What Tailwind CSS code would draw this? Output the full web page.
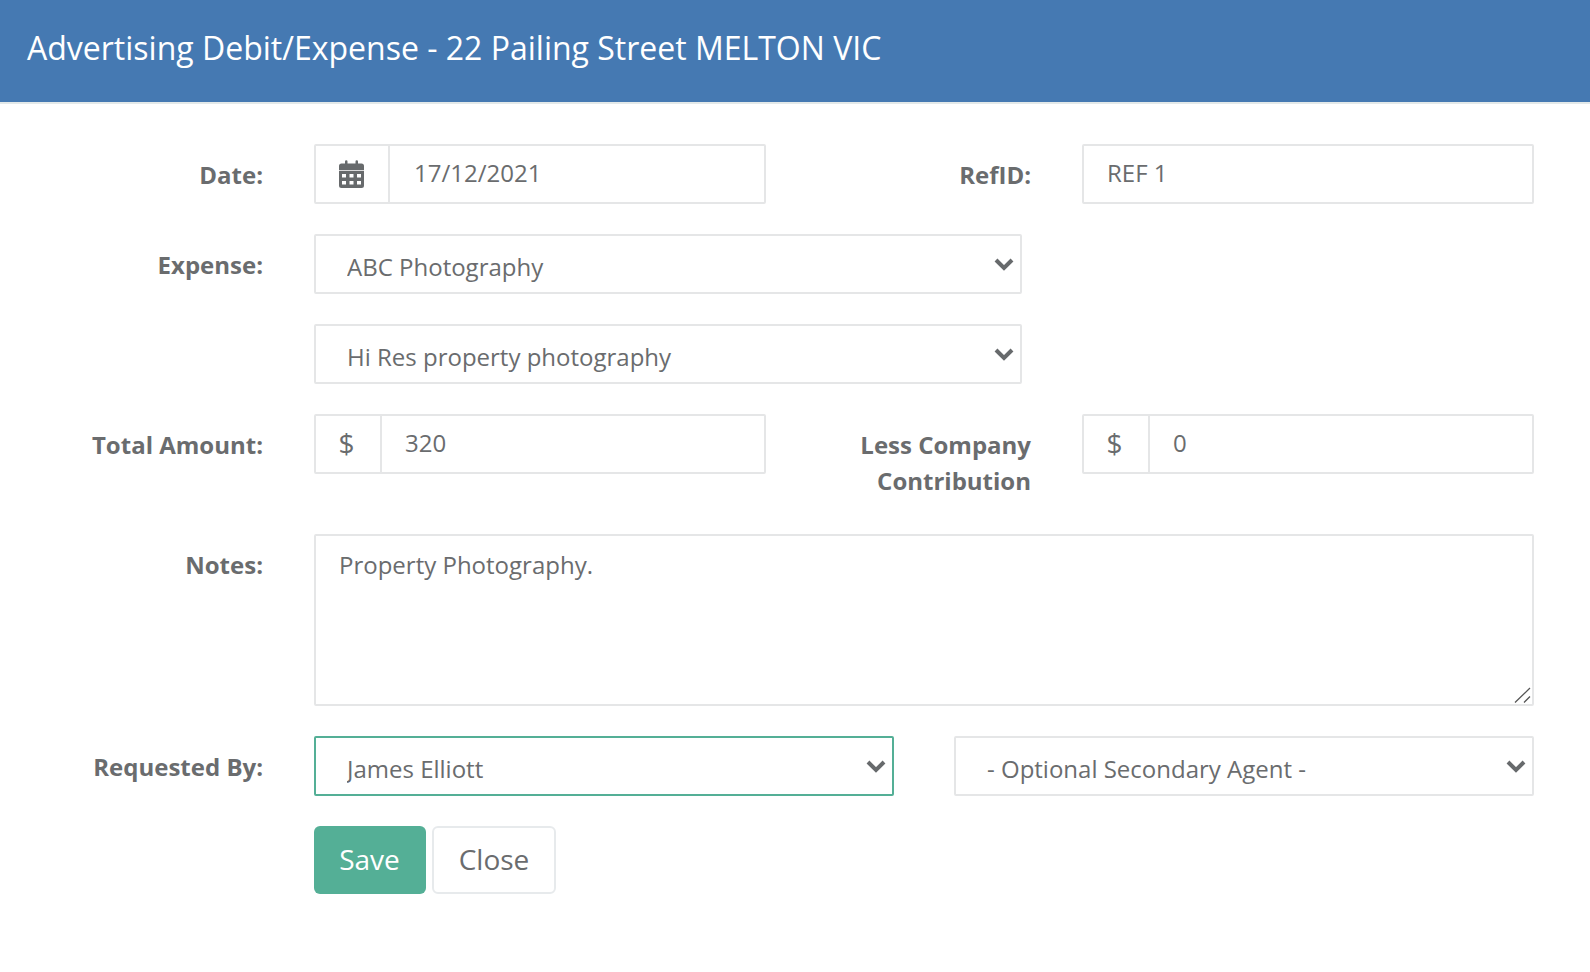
<!DOCTYPE html>
<html lang="en">
<head>
  <meta charset="UTF-8" />
  <meta name="viewport" content="width=device-width, initial-scale=1.0"/>
  <title>Advertising Debit/Expense</title>
  <script src="https://cdn.jsdelivr.net/npm/@tailwindcss/browser@4"></script>
</head>
<body class="bg-white text-[#6a6c6e] font-['Open_Sans',sans-serif] text-[24px]">

  <!-- Header -->
  <div class="h-[104px] bg-[#4579b2] border-b-2 border-[#e3e9e9] pl-[27px] pt-[26px]">
    <h1 class="text-[32px] leading-[44px] text-white">Advertising Debit/Expense - 22 Pailing Street MELTON VIC</h1>
  </div>

  <form class="pt-[40px] pr-[56px]">

    <!-- Date / RefID -->
    <div class="flex h-[60px] mb-[30px]">
      <label class="w-[263px] mr-[51px] pt-[13px] text-right font-bold leading-[36px]">Date:</label>
      <div class="flex w-[452px] h-[60px] border-2 border-[#e5e6e7] rounded-[2px]">
        <span class="w-[74px] flex items-center justify-center border-r-2 border-[#e5e6e7] pr-[2px]">
          <svg class="w-[25px] h-[28px]" viewBox="0 0 25 28" fill="#676a6c">
            <path d="M6 1.500a1.250 1.250 0 0 1 2.500 0V4H6zM16.500 1.500a1.250 1.250 0 0 1 2.500 0V4h-2.500z"/>
            <path d="M2.500 3.500h20A2.500 2.500 0 0 1 25 6v4.300H0V6A2.500 2.500 0 0 1 2.500 3.500z"/>
            <path fill-rule="evenodd" d="M0 11h25V25.500A2.500 2.500 0 0 1 22.500 28h-20A2.500 2.500 0 0 1 0 25.500zM3 14v3.500h4V14zM10.500 14v3.500h4V14zM18 14v3.500h4V14zM3 21v3.500h4V21zM10.500 21v3.500h4V21zM18 21v3.500h4V21z"/>
          </svg>
        </span>
        <input value="17/12/2021" class="flex-1 min-w-0 pl-[24px] pb-[2px] outline-none" />
      </div>
      <label class="w-[265px] mr-[51px] pt-[13px] text-right font-bold leading-[36px]">RefID:</label>
      <input value="REF 1" class="w-[452px] h-[60px] border-2 border-[#e5e6e7] rounded-[2px] pl-[23px] pb-[4px] outline-none" />
    </div>

    <!-- Expense -->
    <div class="flex h-[60px] mb-[30px]">
      <label class="w-[263px] mr-[51px] pt-[13px] text-right font-bold leading-[36px]">Expense:</label>
      <div class="relative w-[708px] h-[60px]">
        <select class="appearance-none w-full h-full border-2 border-[#e5e6e7] rounded-[2px] pl-[31px] pt-[6px] outline-none bg-white">
          <option>ABC Photography</option>
        </select>
        <svg class="absolute right-[8px] top-[23px] w-[20px] h-[14px]" viewBox="0 0 20 14" fill="none" stroke="#676a6c" stroke-width="4"><path d="M2 3l8 8 8-8"/></svg>
      </div>
    </div>

    <div class="flex h-[60px] mb-[30px]">
      <div class="w-[263px] mr-[51px]"></div>
      <div class="relative w-[708px] h-[60px]">
        <select class="appearance-none w-full h-full border-2 border-[#e5e6e7] rounded-[2px] pl-[31px] pt-[6px] outline-none bg-white">
          <option>Hi Res property photography</option>
        </select>
        <svg class="absolute right-[8px] top-[23px] w-[20px] h-[14px]" viewBox="0 0 20 14" fill="none" stroke="#676a6c" stroke-width="4"><path d="M2 3l8 8 8-8"/></svg>
      </div>
    </div>

    <!-- Amounts -->
    <div class="flex h-[90px] mb-[30px]">
      <label class="w-[263px] mr-[51px] pt-[13px] text-right font-bold leading-[36px]">Total Amount:</label>
      <div class="flex w-[452px] h-[60px] border-2 border-[#e5e6e7] rounded-[2px]">
        <span class="w-[66px] flex items-center justify-center border-r-2 border-[#e5e6e7] pb-[2px] pr-[3px] text-[28px]">$</span>
        <input value="320" class="flex-1 min-w-0 pl-[23px] pb-[2px] outline-none" />
      </div>
      <label class="w-[265px] mr-[51px] pt-[13px] text-right font-bold leading-[36px]">Less Company Contribution</label>
      <div class="flex w-[452px] h-[60px] border-2 border-[#e5e6e7] rounded-[2px]">
        <span class="w-[66px] flex items-center justify-center border-r-2 border-[#e5e6e7] pb-[2px] pr-[3px] text-[28px]">$</span>
        <input value="0" class="flex-1 min-w-0 pl-[23px] pb-[2px] outline-none" />
      </div>
    </div>

    <!-- Notes -->
    <div class="flex h-[172px] mb-[30px]">
      <label class="w-[263px] mr-[51px] pt-[13px] text-right font-bold leading-[36px]">Notes:</label>
      <div class="relative w-[1220px] h-[172px]">
        <textarea class="block resize-none w-full h-full border-2 border-[#e5e6e7] rounded-[2px] pl-[23px] pt-[11px] leading-[36px] outline-none">Property Photography.</textarea>
        <!-- resize grip -->
        <svg class="absolute right-[3px] bottom-[3px] w-[17px] h-[16px]" viewBox="0 0 17 16" fill="none" stroke="#555" stroke-width="1.300"><path d="M1 15.500L16 1M10 15.500L16 9.500"/></svg>
      </div>
    </div>

    <!-- Requested by -->
    <div class="flex h-[60px] mb-[30px]">
      <label class="w-[263px] mr-[51px] pt-[13px] text-right font-bold leading-[36px]">Requested By:</label>
      <div class="relative w-[580px] h-[60px] mr-[60px]">
        <select class="appearance-none w-full h-full border-2 border-[#54af96] rounded-[2px] pl-[31px] pt-[6px] outline-none bg-white">
          <option>James Elliott</option>
        </select>
        <svg class="absolute right-[8px] top-[23px] w-[20px] h-[14px]" viewBox="0 0 20 14" fill="none" stroke="#676a6c" stroke-width="4"><path d="M2 3l8 8 8-8"/></svg>
      </div>
      <div class="relative w-[580px] h-[60px]">
        <select class="appearance-none w-full h-full border-2 border-[#e5e6e7] rounded-[2px] pl-[31px] pt-[6px] outline-none bg-white">
          <option>- Optional Secondary Agent -</option>
        </select>
        <svg class="absolute right-[8px] top-[23px] w-[20px] h-[14px]" viewBox="0 0 20 14" fill="none" stroke="#676a6c" stroke-width="4"><path d="M2 3l8 8 8-8"/></svg>
      </div>
    </div>

    <!-- Buttons -->
    <div class="flex ml-[314px] gap-[6px]">
      <button type="button" class="w-[112px] h-[68px] bg-[#54af96] text-white text-[28px] rounded-[6px] pb-[2px] pr-[1px]">Save</button>
      <button type="button" class="w-[124px] h-[68px] border-2 border-[#e7eaec] bg-white text-[28px] rounded-[6px] pb-[2px]">Close</button>
    </div>

  </form>

</body>
</html>
